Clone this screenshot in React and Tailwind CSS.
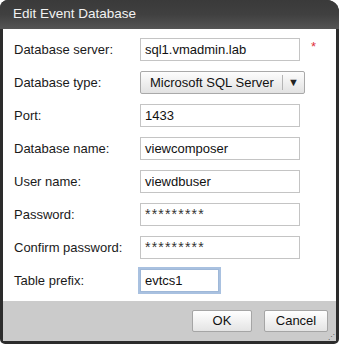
import React from 'react';

const font = { fontFamily: '"Liberation Sans", Arial, sans-serif' };

const rows = [
  { label: 'Database server:', value: 'sql1.vmadmin.lab', required: true },
  { label: 'Database type:', select: 'Microsoft SQL Server' },
  { label: 'Port:', value: '1433' },
  { label: 'Database name:', value: 'viewcomposer' },
  { label: 'User name:', value: 'viewdbuser' },
  { label: 'Password:', value: '*********', secret: true },
  { label: 'Confirm password:', value: '*********', secret: true },
  { label: 'Table prefix:', value: 'evtcs1', focused: true },
];

function Field({ row }) {
  if (row.select) {
    return (
      <div className="flex h-[23px] w-[165px] items-center rounded-[2px] border border-[#a9a9a9] bg-gradient-to-b from-[#fdfdfd] to-[#e2e2e2] text-[13px] text-[#111]">
        <span className="flex-1 pl-[9px]">{row.select}</span>
        <span className="h-[15px] w-px bg-[#b5b5b5]" />
        <span className="flex w-[21px] justify-center text-[11px] text-[#222]">▼</span>
      </div>
    );
  }
  return (
    <div
      className={
        'flex h-[23px] items-center border bg-white pl-[4px] text-[13px] text-[#111] ' +
        (row.focused
          ? 'w-[79px] border-[#9fb8d8] outline-2 outline-[#a9c1e0]'
          : 'w-[160px] border-[#c4c4c4]')
      }
    >
      <span className={row.secret ? 'text-[14px] tracking-[1.2px] text-[#333]' : ''}>{row.value}</span>
    </div>
  );
}

export default function App() {
  return (
    <div style={font} className="h-[344px] w-[339px] bg-white">
      <div className="flex h-[344px] w-[339px] flex-col overflow-hidden rounded-tl-[8px] rounded-tr-[12px] rounded-b-[5px] bg-[#2c2c2c] pb-[3px] pl-[3px] pr-[3px]">
        <div className="-ml-[3px] -mr-[3px] flex h-[29px] items-center bg-gradient-to-b from-[#3a3a3a] via-[#404040] to-[#555555] pl-[13px] text-[13.5px] text-[#f2f2f2]">
          Edit Event Database
        </div>
        <div className="flex flex-1 flex-col gap-[10px] bg-white pl-[11px] pt-[9px]">
          {rows.map((row) => (
            <div key={row.label} className="flex items-center">
              <span className="w-[126px] text-[13px] text-[#1a1a1a]">{row.label}</span>
              <Field row={row} />
              {row.required && (
                <span className="ml-[11px] -mt-[6px] text-[13px] text-[#e0303a]">*</span>
              )}
            </div>
          ))}
        </div>
        <div className="relative flex h-[40px] items-center justify-end gap-[12px] bg-[#cbcbcb] pr-[8px]">
          <button className="h-[22px] w-[60px] rounded-[2px] border border-[#a5a5a5] bg-gradient-to-b from-[#ffffff] to-[#e4e4e4] text-[13px] text-[#111]">
            OK
          </button>
          <button className="h-[22px] w-[64px] rounded-[2px] border border-[#a5a5a5] bg-gradient-to-b from-[#ffffff] to-[#e4e4e4] text-[13px] text-[#111]">
            Cancel
          </button>
          <span className="absolute bottom-[1px] right-[1px] text-[7px] leading-none text-[#555]">⋰</span>
        </div>
      </div>
    </div>
  );
}
